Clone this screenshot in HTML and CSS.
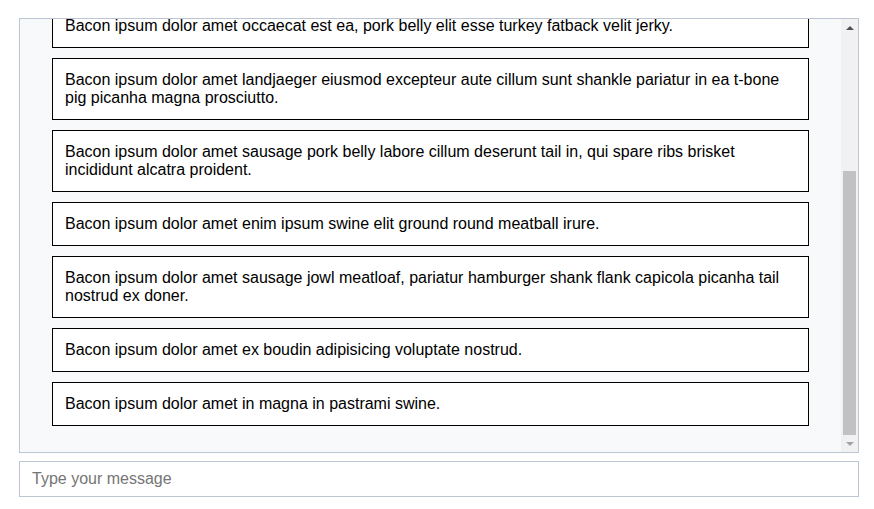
FILE: index.html
```html
<!DOCTYPE html>
<html lang="en">
<head>
<meta charset="utf-8">
<title>Chat</title>
<link rel="stylesheet" href="styles.css">
</head>
<body>
<div class="app">
  <div class="chat">
    <div class="viewport">
      <div class="messages">
        <div class="message">Bacon ipsum dolor amet short loin chuck ball tip, tri-tip doner pastrami cupim jowl leberkas.</div>
        <div class="message">Bacon ipsum dolor amet pancetta brisket ham hock, strip steak beef ribs alcatra fatback kielbasa short ribs turducken bresaola.</div>
        <div class="message">Bacon ipsum dolor amet filet mignon tongue andouille sirloin.</div>
        <div class="message">Bacon ipsum dolor amet occaecat est ea, pork belly elit esse turkey fatback velit jerky.</div>
        <div class="message">Bacon ipsum dolor amet landjaeger eiusmod excepteur aute cillum sunt shankle pariatur in ea t-bone pig picanha magna prosciutto.</div>
        <div class="message">Bacon ipsum dolor amet sausage pork belly labore cillum deserunt tail in, qui spare ribs brisket incididunt alcatra proident.</div>
        <div class="message">Bacon ipsum dolor amet enim ipsum swine elit ground round meatball irure.</div>
        <div class="message">Bacon ipsum dolor amet sausage jowl meatloaf, pariatur hamburger shank flank capicola picanha tail nostrud ex doner.</div>
        <div class="message">Bacon ipsum dolor amet ex boudin adipisicing voluptate nostrud.</div>
        <div class="message">Bacon ipsum dolor amet in magna in pastrami swine.</div>
      </div>
    </div>
    <div class="scrollbar" aria-hidden="true">
      <div class="sb-button">
        <svg width="8" height="4" viewBox="0 0 8 4"><polygon points="0,4 8,4 4,0" fill="#505050"/></svg>
      </div>
      <div class="sb-track">
        <div class="sb-thumb"></div>
      </div>
      <div class="sb-button">
        <svg width="8" height="4" viewBox="0 0 8 4"><polygon points="0,0 8,0 4,4" fill="#a3a3a3"/></svg>
      </div>
    </div>
  </div>
  <input class="composer" type="text" placeholder="Type your message">
</div>
</body>
</html>
```

FILE: styles.css
```css
html, body {
  margin: 0;
  padding: 0;
  background: #ffffff;
}

body {
  font-family: "Liberation Sans", Arial, sans-serif;
  font-size: 16px;
  color: #000000;
}

.app {
  width: 840px;
  margin: 18px 0 0 19px;
  display: flex;
  flex-direction: column;
  gap: 8px;
}

.chat {
  box-sizing: border-box;
  height: 435px;
  border: 1px solid #bcc6d3;
  background: #f8f9fa;
  display: flex;
  flex-direction: row;
}

.viewport {
  flex: 1;
  min-width: 0;
  overflow: hidden;
  display: flex;
  flex-direction: column-reverse;
}

.messages {
  display: flex;
  flex-direction: column;
  gap: 10px;
  padding: 16px 32px 26px 32px;
}

.message {
  background: #ffffff;
  border: 1px solid #000000;
  padding: 12px;
  line-height: 18px;
}

.scrollbar {
  width: 17px;
  flex: none;
  background: #f1f1f1;
  display: flex;
  flex-direction: column;
}

.sb-button {
  height: 17px;
  flex: none;
  display: flex;
  align-items: center;
  justify-content: center;
}

.sb-button svg {
  display: block;
}

.sb-track {
  flex: 1;
  display: flex;
  flex-direction: column;
  justify-content: flex-end;
  padding: 0 2px;
}

.sb-thumb {
  height: 264px;
  background: #c1c1c1;
}

.composer {
  box-sizing: border-box;
  width: 840px;
  height: 36px;
  margin: 0;
  border: 1px solid #bcc6d3;
  border-radius: 0;
  padding: 0 12px;
  font-family: "Liberation Sans", Arial, sans-serif;
  font-size: 16px;
  color: #000000;
  background: #ffffff;
  outline: none;
}

.composer::placeholder {
  color: #757575;
}
```
